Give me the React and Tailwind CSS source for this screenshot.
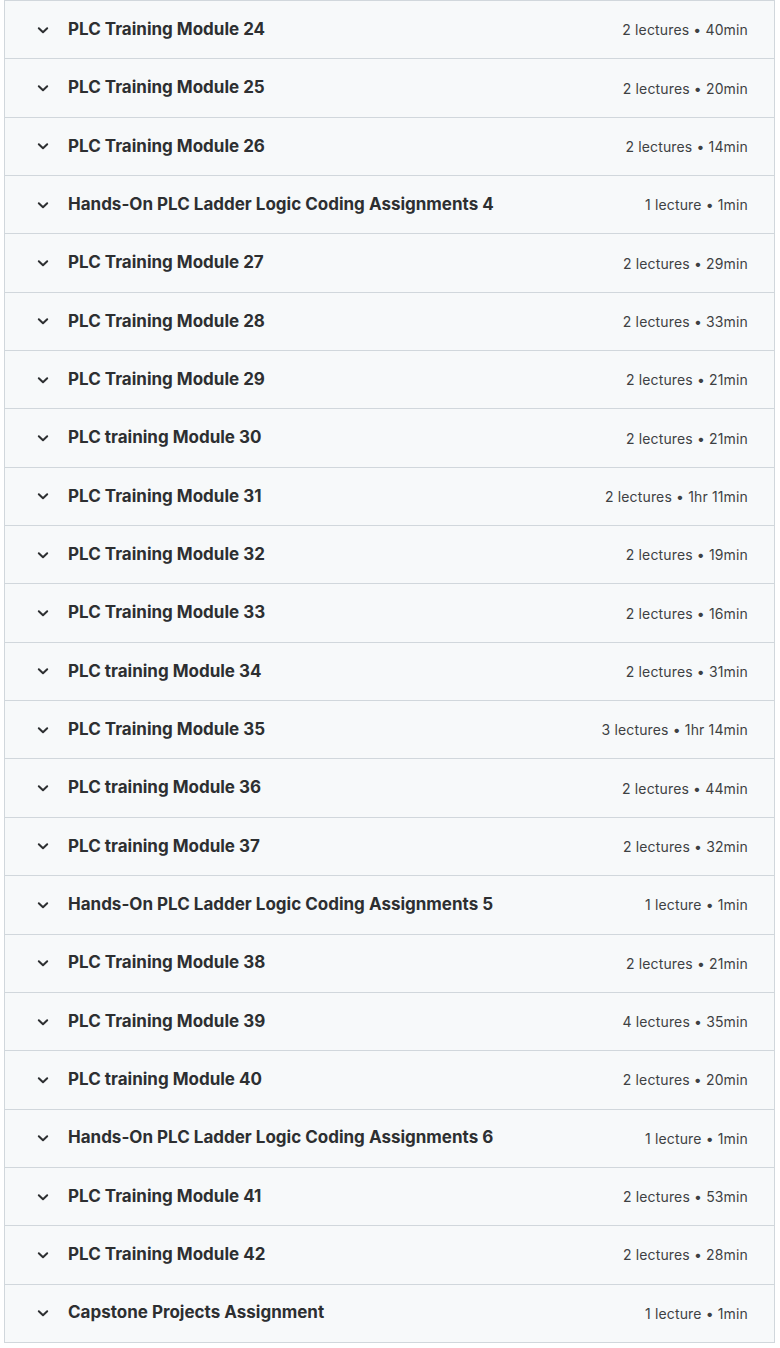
import React from "react";

const rows = [
  ["PLC Training Module 24", "2 lectures • 40min"],
  ["PLC Training Module 25", "2 lectures • 20min"],
  ["PLC Training Module 26", "2 lectures • 14min"],
  ["Hands-On PLC Ladder Logic Coding Assignments 4", "1 lecture • 1min"],
  ["PLC Training Module 27", "2 lectures • 29min"],
  ["PLC Training Module 28", "2 lectures • 33min"],
  ["PLC Training Module 29", "2 lectures • 21min"],
  ["PLC training Module 30", "2 lectures • 21min"],
  ["PLC Training Module 31", "2 lectures • 1hr 11min"],
  ["PLC Training Module 32", "2 lectures • 19min"],
  ["PLC Training Module 33", "2 lectures • 16min"],
  ["PLC training Module 34", "2 lectures • 31min"],
  ["PLC Training Module 35", "3 lectures • 1hr 14min"],
  ["PLC training Module 36", "2 lectures • 44min"],
  ["PLC training Module 37", "2 lectures • 32min"],
  ["Hands-On PLC Ladder Logic Coding Assignments 5", "1 lecture • 1min"],
  ["PLC Training Module 38", "2 lectures • 21min"],
  ["PLC Training Module 39", "4 lectures • 35min"],
  ["PLC training Module 40", "2 lectures • 20min"],
  ["Hands-On PLC Ladder Logic Coding Assignments 6", "1 lecture • 1min"],
  ["PLC Training Module 41", "2 lectures • 53min"],
  ["PLC Training Module 42", "2 lectures • 28min"],
  ["Capstone Projects Assignment", "1 lecture • 1min"],
];

function Chevron() {
  return (
    <svg width="16" height="16" viewBox="0 0 16 16" className="shrink-0">
      <path d="M3.8 6.2 L8 10.2 L12.2 6.2" fill="none" stroke="#2d2f31" strokeWidth="2" strokeLinecap="round" strokeLinejoin="round" />
    </svg>
  );
}

export default function App() {
  return (
    <div className="w-[780px] bg-white pl-[4px] pb-[5px]" style={{ fontFamily: "Inter, 'Noto Sans', sans-serif" }}>
      <div className="w-[771px] border border-[#d1d7dc] bg-[#f7f9fa]">
        {rows.map(([title, meta], i) => (
          <div
            key={i}
            className={`flex items-center pl-[30px] pr-[26px] ${i > 0 ? "h-[58.35px] border-t border-[#d1d7dc]" : "h-[57.35px]"}`}
          >
            <Chevron />
            <div className="ml-[17px] flex-1 text-[17px] font-bold text-[#2d2f31]">{title}</div>
            <div className="text-[14px] text-[#3e4143] tracking-[0.15px]">{meta}</div>
          </div>
        ))}
      </div>
    </div>
  );
}
